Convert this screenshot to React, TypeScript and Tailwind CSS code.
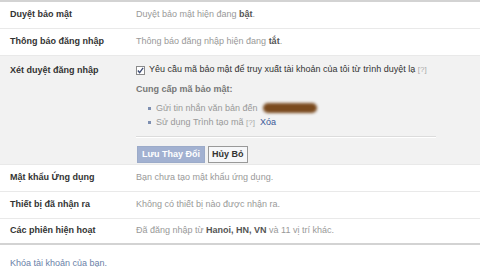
const font = { fontFamily: '"Liberation Sans", Arial, sans-serif' };

function Row({ label, children }: { label: string; children: React.ReactNode }) {
  return (
    <div className="flex h-[27px] items-center border-b border-[#e9e9e9]">
      <div className="w-[136px] shrink-0 pl-[10px] text-[9px] font-bold text-[#333]">{label}</div>
      <div className="text-[9px] text-[#999]">{children}</div>
    </div>
  );
}

export default function App() {
  return (
    <div className="h-[276px] w-[480px] overflow-hidden bg-white" style={font}>
      <div className="border-t-2 border-[#d3d3d3]">
        <Row label="Duyệt bảo mật">
          Duyệt bảo mật hiện đang <b className="text-[#555]">bật</b>.
        </Row>
        <Row label="Thông báo đăng nhập">
          Thông báo đăng nhập hiện đang <b className="text-[#555]">tắt</b>.
        </Row>

        <div className="flex h-[109px] border-b border-[#e9e9e9] bg-[#f2f2f2]">
          <div className="w-[136px] shrink-0 pl-[10px] pt-[8px] text-[9px] leading-[12px] font-bold text-[#333]">
            Xét duyệt đăng nhập
          </div>
          <div className="flex w-[300px] flex-col pt-[8px]">
            <div className="flex h-[12px] items-center gap-[4px] text-[9px] text-[#333]">
              <span className="flex h-[9px] w-[9px] shrink-0 items-center justify-center border border-[#8a8a8a] bg-white">
                <svg width="7" height="7" viewBox="0 0 8 8">
                  <path d="M1 4 L3 6.5 L7 1" fill="none" stroke="#3c4b73" strokeWidth="1.5" />
                </svg>
              </span>
              <span className="whitespace-nowrap">
                Yêu cầu mã bảo mật để truy xuất tài khoản của tôi từ trình duyệt lạ{' '}
                <span className="text-[8px] text-[#aaa]">[?]</span>
              </span>
            </div>
            <div className="mt-[7px] h-[12px] text-[9px] leading-[12px] font-bold text-[#777]">
              Cung cấp mã bảo mật:
            </div>
            <ul className="mt-[6px] pl-[12px] text-[9px] leading-[14px] text-[#999]">
              <li className="flex items-center gap-[5px]">
                <span className="h-[3px] w-[3px] shrink-0 bg-[#7e8fb1]" />
                <span>Gửi tin nhắn văn bản đến</span>
                <span className="h-[10px] w-[54px] shrink-0 rounded-full bg-[#7a4a1e] blur-[1.5px]" />
              </li>
              <li className="flex items-center gap-[5px]">
                <span className="h-[3px] w-[3px] shrink-0 bg-[#7e8fb1]" />
                <span>
                  Sử dụng Trình tạo mã <span className="text-[8px] text-[#aaa]">[?]</span>
                  <span className="ml-[5px] text-[#3b5998]">Xóa</span>
                </span>
              </li>
            </ul>
            <div className="mt-[6px] border-t border-[#dcdcdc] shadow-[0_1px_0_#fff]" />
            <div className="mt-[9px] flex gap-[3px] pl-[1px]">
              <button className="h-[17px] border border-[#9cabc9] bg-[#a2b1d1] px-[4px] text-[9px] font-bold text-white">
                Lưu Thay Đổi
              </button>
              <button className="h-[17px] border border-[#999] bg-[#f6f7f9] px-[3px] text-[9px] font-bold text-[#333]">
                Hủy Bỏ
              </button>
            </div>
          </div>
        </div>

        <Row label="Mật khẩu Ứng dụng">Bạn chưa tạo mật khẩu ứng dụng.</Row>
        <Row label="Thiết bị đã nhận ra">Không có thiết bị nào được nhận ra.</Row>
        <div className="flex h-[26px] items-center border-b-2 border-[#d3d3d3]">
          <div className="w-[136px] shrink-0 pl-[10px] text-[9px] font-bold text-[#333]">Các phiên hiện hoạt</div>
          <div className="text-[9px] text-[#999]">
            Đã đăng nhập từ <b className="text-[#555]">Hanoi, HN, VN</b> và 11 vị trí khác.
          </div>
        </div>
      </div>
      <div className="pl-[10px] pt-[12px] text-[9px] text-[#6a7fa8]">Khóa tài khoản của bạn.</div>
    </div>
  );
}
